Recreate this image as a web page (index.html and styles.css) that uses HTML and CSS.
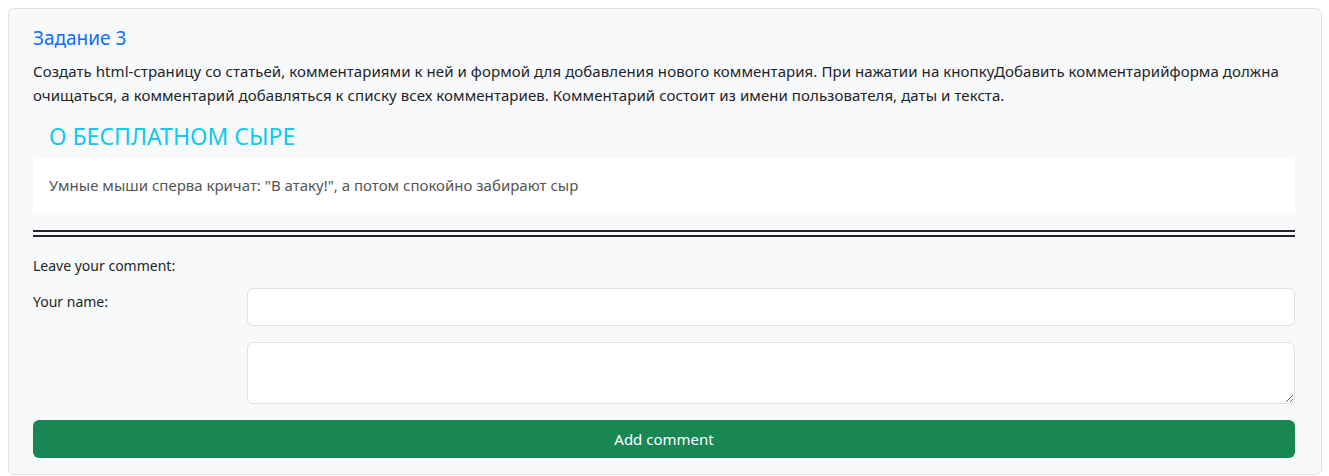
FILE: index.html
```html
<!DOCTYPE html>
<html lang="ru">
<head>
<meta charset="utf-8">
<title>Задание 3</title>
<link rel="stylesheet" href="styles.css">
</head>
<body>
<div class="card">
  <h5 class="task-title">Задание 3</h5>
  <p class="task-text">Создать html-страницу со статьей, комментариями к ней и формой для добавления нового комментария. При нажатии на кнопкуДобавить комментарийформа должна очищаться, а комментарий добавляться к списку всех комментариев. Комментарий состоит из имени пользователя, даты и текста.</p>
  <h2 class="article-title">О БЕСПЛАТНОМ СЫРЕ</h2>
  <div class="article-body">Умные мыши сперва кричат: "В атаку!", а потом спокойно забирают сыр</div>
  <div class="double-rule"></div>
  <form class="comment-form">
    <div class="form-caption">Leave your comment:</div>
    <div class="form-row">
      <label class="form-label" for="name">Your name:</label>
      <input class="form-control" id="name" type="text">
    </div>
    <div class="form-row">
      <span class="form-label"></span>
      <textarea class="form-control textarea"></textarea>
    </div>
    <button type="button" class="btn-add">Add comment</button>
  </form>
</div>
</body>
</html>
```
FILE: styles.css
```css
* { box-sizing: border-box; }
body {
  margin: 8px 7px 0 8px;
  font-family: "Noto Sans", "Open Sans", sans-serif;
  font-size: 15px;
  line-height: 24px;
  color: #212529;
  background: #fff;
}
.card {
  background: #f8f9fa;
  border: 1px solid #dee2e6;
  border-radius: 6px;
  padding: 15px 26px 16px 24px;
}
.task-title {
  margin: 0 0 7px;
  font-size: 19px;
  font-weight: 400;
  line-height: 28px;
  color: #0d6efd;
}
.task-text {
  margin: 0 0 13px;
  letter-spacing: 0.07px;
}
.article-title {
  margin: 0 0 6px;
  padding-left: 16px;
  font-size: 23px;
  font-weight: 400;
  line-height: 32px;
  color: #0dcaf0;
}
.article-body {
  background: #fff;
  padding: 16px 16px;
  color: #555;
  font-size: 15px;
  line-height: 23px;
  border-radius: 3px;
}
.double-rule {
  margin-top: 17px;
  height: 7px;
  border-top: 2px solid #212529;
  border-bottom: 2px solid #212529;
}
.comment-form {
  margin-top: 17px;
  display: flex;
  flex-direction: column;
}
.form-caption { font-size: 14px; line-height: 24px; margin-bottom: 12px; }
.form-row {
  display: grid;
  grid-template-columns: 214px 1fr;
  margin-bottom: 16px;
}
.form-label { font-size: 14px; line-height: 24px; }
.form-control {
  display: block;
  width: 100%;
  height: 38px;
  border: 1px solid #dee2e6;
  border-radius: 6px;
  background: #fff;
  font: inherit;
  padding: 6px 12px;
  margin-top: -2px;
}
.textarea {
  height: 62px;
  resize: vertical;
  margin-top: 0;
}
.btn-add {
  height: 38px;
  border: none;
  border-radius: 6px;
  background: #198754;
  color: #fff;
  font-family: inherit;
  font-size: 15px;
  cursor: pointer;
}
```
